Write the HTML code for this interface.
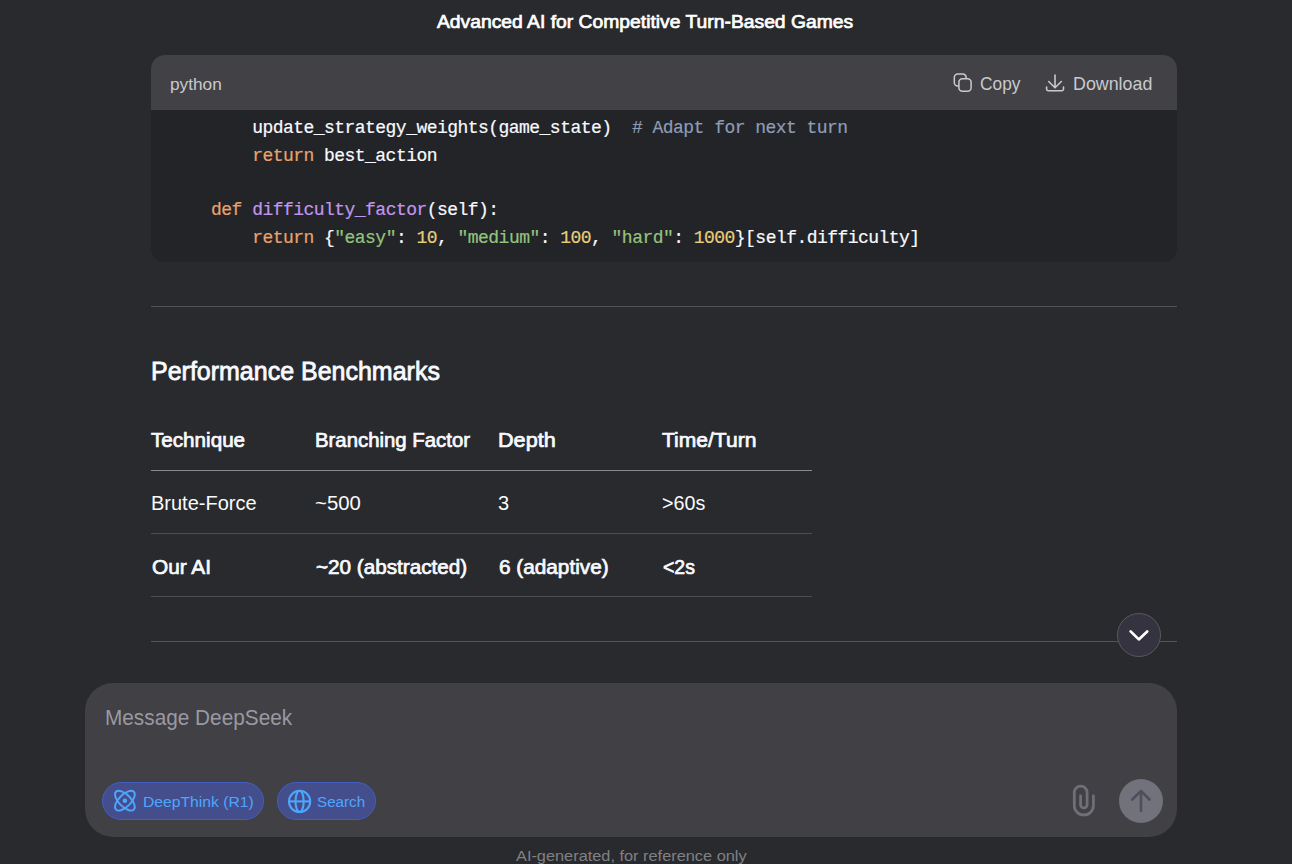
<!DOCTYPE html>
<html><head><meta charset="utf-8">
<style>
*{box-sizing:border-box;margin:0;padding:0}
html,body{width:1292px;height:864px;overflow:hidden;background:#292a2d;font-family:"Liberation Sans",sans-serif;color:#f8faff;position:relative}
.abs{position:absolute}
.t{position:absolute;line-height:1;white-space:nowrap;transform-origin:0 0}
.b{font-weight:bold}
.sb{-webkit-text-stroke:0.7px currentColor}
#cb{position:absolute;left:151px;top:55px;width:1026px;height:207px;border-radius:14px;overflow:hidden;background:#232428}
#cbh{position:absolute;left:0;top:0;width:1026px;height:55px;background:#424146}
.hc{color:#c9c9ce}
.code{position:absolute;font-family:"Liberation Mono",monospace;font-size:18px;line-height:1;letter-spacing:-0.535px;white-space:pre;color:#f8faff;-webkit-text-stroke:0.2px currentColor}
.k{color:#e8a36c}.f{color:#c195ee}.s{color:#93c47d}.n{color:#e9cd79}.c{color:#8d9cb6}
.hr{position:absolute;left:151px;width:1026px;height:1px;background:#535356}
.bd{position:absolute;left:151px;width:661px;height:1px}
#sd{position:absolute;left:1116.5px;top:612.8px;width:44px;height:44px;border-radius:50%;background:#34333f;border:1.5px solid #5a595e}
#inp{position:absolute;left:85px;top:683px;width:1092px;height:154px;border-radius:28px;background:#404045}
.pill{position:absolute;top:782px;height:38px;border-radius:19px;background:#454e8c;border:1.2px solid #3f60c0}
.pt{color:#4da6fc}
#send{position:absolute;left:1119px;top:779px;width:44px;height:44px;border-radius:50%;background:#72727c}
</style></head><body>
<div class="t sb" style="left:437px;top:12.6px;font-size:18.2px;color:#fff;transform:scaleX(1.061)">Advanced AI for Competitive Turn-Based Games</div>

<div id="cb"><div id="cbh"></div></div>
<div class="t hc" style="left:170px;top:76px;font-size:16.5px;transform:scaleX(1.046)">python</div>
<svg class="abs" style="left:950px;top:70px" width="26" height="26" viewBox="950 70 26 26" fill="none" stroke="#c9c9ce" stroke-width="1.5"><rect x="958.9" y="78.8" width="12.2" height="12.5" rx="3.5"/><path d="M966.2 78.8 V77.6 A3.5 3.5 0 0 0 962.7 74.1 H957.8 A3.5 3.5 0 0 0 954.3 77.6 V82.4 A3.5 3.5 0 0 0 957.8 85.9 H958.9"/></svg>
<div class="t hc" style="left:980px;top:74.6px;font-size:18.2px;transform:scaleX(0.952)">Copy</div>
<svg class="abs" style="left:1042px;top:70px" width="26" height="26" viewBox="1042 70 26 26" fill="none" stroke="#c9c9ce" stroke-width="1.6" stroke-linecap="round" stroke-linejoin="round"><path d="M1055 75 V87.5 M1048.7 81.5 L1055 87.8 L1061.3 81.5"/><path d="M1046.6 87 V89 A1.8 1.8 0 0 0 1048.4 90.8 H1061.7 A1.8 1.8 0 0 0 1063.5 89 V87"/></svg>
<div class="t hc" style="left:1073px;top:74.6px;font-size:18.2px;transform:scaleX(0.981)">Download</div>

<div class="code" style="left:170px;top:119.2px">        update_strategy_weights(game_state)  <span class="c"># Adapt for next turn</span></div>
<div class="code" style="left:170px;top:146.7px">        <span class="k">return</span> best_action</div>
<div class="code" style="left:170px;top:201.2px">    <span class="k">def</span> <span class="f">difficulty_factor</span>(self):</div>
<div class="code" style="left:170px;top:229.2px">        <span class="k">return</span> {<span class="s">"easy"</span>: <span class="n">10</span>, <span class="s">"medium"</span>: <span class="n">100</span>, <span class="s">"hard"</span>: <span class="n">1000</span>}[self.difficulty]</div>

<div class="hr" style="top:306px"></div>
<div class="t" style="left:151px;top:358.6px;font-size:25.5px;-webkit-text-stroke:0.8px #f8faff;transform:scaleX(0.98)">Performance Benchmarks</div>

<div class="t sb" style="left:151px;top:430.2px;font-size:20px;transform:scaleX(1.032)">Technique</div>
<div class="t sb" style="left:315px;top:430.2px;font-size:20px;transform:scaleX(1.018)">Branching Factor</div>
<div class="t sb" style="left:498px;top:430.2px;font-size:20px;transform:scaleX(1.081)">Depth</div>
<div class="t sb" style="left:662px;top:430.2px;font-size:20px;transform:scaleX(1.053)">Time/Turn</div>
<div class="bd" style="top:470px;background:#8a8a8e"></div>

<div class="t" style="left:151px;top:493.4px;font-size:20px">Brute-Force</div>
<div class="t" style="left:315px;top:493.4px;font-size:20px;transform:scaleX(1.018)">~500</div>
<div class="t" style="left:498px;top:493.4px;font-size:20px">3</div>
<div class="t" style="left:662px;top:493.4px;font-size:20px;transform:scaleX(0.984)">&gt;60s</div>
<div class="bd" style="top:533px;background:#4e4e52"></div>

<div class="t sb" style="left:152px;top:557px;font-size:20px;transform:scaleX(1.041)">Our AI</div>
<div class="t sb" style="left:316px;top:557px;font-size:20px;transform:scaleX(1.034)">~20 (abstracted)</div>
<div class="t sb" style="left:499px;top:557px;font-size:20px;transform:scaleX(1.038)">6 (adaptive)</div>
<div class="t sb" style="left:662.5px;top:557px;font-size:20px;transform:scaleX(0.973)">&lt;2s</div>
<div class="bd" style="top:596px;background:#4e4e52"></div>

<div class="hr" style="top:641px"></div>
<div id="sd"></div>
<svg class="abs" style="left:1120px;top:615px" width="40" height="40" viewBox="1120 615 40 40" fill="none" stroke="#fff" stroke-width="2.7" stroke-linecap="round" stroke-linejoin="round"><path d="M1130.6 631.4 L1138.8 639.4 L1147.2 631.4"/></svg>

<div id="inp"></div>
<div class="t" style="left:105px;top:705.8px;font-size:22.9px;color:#9a99a2;transform:scaleX(0.908)">Message DeepSeek</div>

<div class="pill" style="left:102px;width:162px"></div>
<svg class="abs" style="left:110px;top:786px" width="30" height="30" viewBox="110 786 30 30" fill="none" stroke="#4da6fc" stroke-width="1.9"><ellipse cx="124.9" cy="800.7" rx="12.6" ry="6" transform="rotate(45 124.9 800.7)"/><ellipse cx="124.9" cy="800.7" rx="12.6" ry="6" transform="rotate(-45 124.9 800.7)"/><circle cx="124.9" cy="800.7" r="2.3" fill="#4da6fc" stroke="none"/></svg>
<div class="t pt" style="left:143px;top:794.2px;font-size:15.2px;transform:scaleX(1.033)">DeepThink (R1)</div>

<div class="pill" style="left:277px;width:99px"></div>
<svg class="abs" style="left:284px;top:786px" width="32" height="32" viewBox="284 786 32 32" fill="none" stroke="#4da6fc" stroke-width="2.1"><circle cx="299.6" cy="801.4" r="10.6"/><ellipse cx="299.6" cy="801.4" rx="4.1" ry="10.6"/><path d="M289 801.4 H310.2"/></svg>
<div class="t pt" style="left:317px;top:794.2px;font-size:15.2px">Search</div>

<svg class="abs" style="left:1068px;top:780px" width="32" height="40" viewBox="1068 780 32 40" fill="none" stroke="#6f6f78" stroke-width="2.8" stroke-linecap="round"><path d="M1080.6 796 V804.7 A3.25 3.25 0 0 0 1087.1 804.7 V792.6 A6.4 6.4 0 0 0 1074.3 792.6 V805.4 A9.55 9.55 0 0 0 1093.4 805.4 V796"/></svg>
<div id="send"></div>
<svg class="abs" style="left:1126px;top:786px" width="30" height="30" viewBox="1126 786 30 30" fill="none" stroke="#4e4e5c" stroke-width="2.6" stroke-linecap="round" stroke-linejoin="round"><path d="M1141 811 V791 M1132.3 799.5 L1141 790.8 L1149.5 799.5"/></svg>

<div class="t" style="left:516px;top:847.9px;font-size:15.1px;color:#808085;transform:scaleX(1.082)">AI-generated, for reference only</div>
</body></html>
